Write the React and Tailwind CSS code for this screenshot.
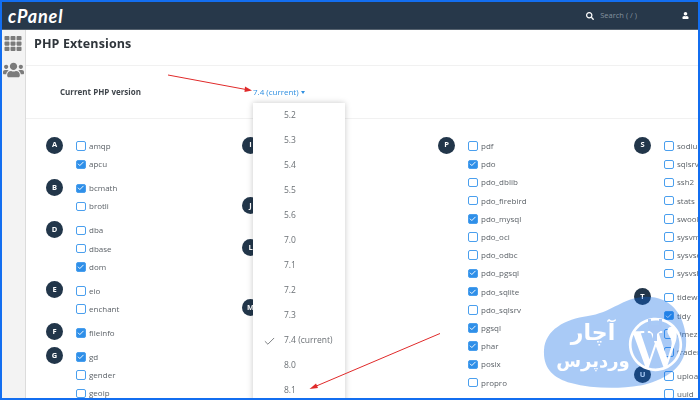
import React from "react";
import { Check } from "lucide-react";
import { FaTh, FaUsers, FaSearch, FaUser, FaWordpressSimple } from "react-icons/fa";

const columns = [
  [
    { letter: "A", rows: [["amqp"], ["apcu", true]] },
    { letter: "B", rows: [["bcmath", true], ["brotli"]] },
    { letter: "D", rows: [["dba"], ["dbase"], ["dom", true]] },
    { letter: "E", rows: [["eio"], ["enchant"]] },
    { letter: "F", rows: [["fileinfo", true]] },
    { letter: "G", rows: [["gd", true], ["gender"], ["geoip"]] },
  ],
  // these rows sit behind the open version menu
  [
    { letter: "I", blank: 3 },
    { letter: "J", blank: 2 },
    { letter: "L", blank: 3 },
    { letter: "M", blank: 3 },
  ],
  [
    {
      letter: "P",
      rows: [
        ["pdf"],
        ["pdo", true],
        ["pdo_dblib"],
        ["pdo_firebird"],
        ["pdo_mysql", true],
        ["pdo_oci"],
        ["pdo_odbc"],
        ["pdo_pgsql", true],
        ["pdo_sqlite", true],
        ["pdo_sqlsrv"],
        ["pgsql", true],
        ["phar", true],
        ["posix", true],
        ["propro"],
      ],
    },
  ],
  [
    {
      letter: "S",
      rows: [["sodium"], ["sqlsrv"], ["ssh2"], ["stats"], ["swoole"], ["sysvmsg"], ["sysvsem"], ["sysvshm"]],
    },
    { letter: "T", rows: [["tideways"], ["tidy", true], ["timezonedb"], ["trader"]] },
    { letter: "U", rows: [["uploadprogress"], ["uuid"]] },
  ],
];

const versions = ["5.2", "5.3", "5.4", "5.5", "5.6", "7.0", "7.1", "7.2", "7.3", "7.4 (current)", "8.0", "8.1"];

function Group({ letter, rows = [], blank = 0 }) {
  return (
    <div className="flex mb-[5.8px]">
      <div className="w-[17px] h-[17px] mt-[-0.5px] rounded-full bg-[#22364a] text-white text-[7.5px] font-bold flex items-center justify-center shrink-0">
        {letter}
      </div>
      <div className="ml-[13px]">
        {rows.map(([name, checked]) => (
          <div key={name} className="h-[18.2px] flex items-center whitespace-nowrap">
            <span
              className={`w-[9.5px] h-[9.5px] rounded-[2px] border border-[#4a9fee] flex items-center justify-center shrink-0 ${
                checked ? "bg-[#2f8fe8]" : "bg-white"
              }`}
            >
              {checked && <Check className="w-[8px] h-[8px] text-white" strokeWidth={3} />}
            </span>
            <span className="ml-[3.5px] text-[8px] text-[#5c6268]">{name}</span>
          </div>
        ))}
        {Array.from({ length: blank }).map((_, i) => (
          <div key={i} className="h-[18.2px]" />
        ))}
      </div>
    </div>
  );
}

export default function App() {
  return (
    <div className="relative w-[700px] h-[400px] overflow-hidden bg-white border-2 border-[#136ef0] font-['Open_Sans',sans-serif]">
      <div className="flex flex-col h-full blur-[0.3px]">
        {/* Top bar */}
        <header className="h-[28px] shrink-0 bg-[#27384a] border-b border-[#56626e] flex items-center">
          <span className="ml-[6px] text-[18px] leading-none font-bold italic text-white font-['Lato',sans-serif] tracking-[0.9px]">
            cPanel
          </span>
          <FaSearch className="ml-auto w-[8px] h-[8px] text-white" />
          <span className="ml-[6px] text-[7.5px] text-[#84929f]">Search ( / )</span>
          <FaUser className="ml-[45px] mr-[9px] w-[7px] h-[7px] text-white" />
        </header>

        <div className="flex flex-1 min-h-0">
          {/* Sidebar */}
          <aside className="w-[24px] shrink-0 bg-[#f3f3f3] border-r border-[#dcdcdc] flex flex-col items-center pt-[5px] pr-[1px]">
            <FaTh className="w-[18px] h-[17px] text-[#7b7b7b]" />
            <FaUsers className="w-[21px] h-[18px] mt-[9px] text-[#7b7b7b]" />
          </aside>

          <main className="flex-1 min-w-0">
            <div className="h-[36px] pl-[8px] border-b border-[#f1f1f1] flex items-center">
              <h1 className="text-[12.5px] font-bold text-[#2f353b] tracking-[0.1px] pb-[10px] mt-[3px]">PHP Extensions</h1>
            </div>

            {/* Version row */}
            <div className="relative h-[53px] pl-[34px] border-b border-[#f1f1f1] flex items-center">
              <span className="w-[193px] text-[8px] font-bold text-[#40464c]">Current PHP version</span>
              <span className="text-[8px] text-[#2f8fe0] flex items-center">
                7.4 (current)
                <span className="ml-[2px] mt-[1px] border-x-[2.5px] border-x-transparent border-t-[3px] border-t-[#2f8fe0]" />
              </span>
              <div className="absolute z-10 left-[227px] top-[37px] w-[92px] h-[320px] bg-white shadow-[0_0_6px_rgba(0,0,0,0.22)]">
                {versions.map((v) => (
                  <div key={v} className="relative h-[25px] pl-[31px] flex items-center text-[8.5px] text-[#6b7075]">
                    {v.includes("current") && (
                      <Check className="absolute left-[10px] top-[7px] w-[13px] h-[13px] text-[#55595d]" strokeWidth={1.4} />
                    )}
                    {v}
                  </div>
                ))}
              </div>
            </div>

            {/* Extension columns */}
            <div className="grid grid-cols-[196px_196px_196px_196px] pl-[20px] pt-[18px]">
              {columns.map((col) => (
                <div key={col[0].letter}>
                  {col.map((g) => (
                    <Group key={g.letter} letter={g.letter} rows={g.rows} blank={g.blank} />
                  ))}
                </div>
              ))}
            </div>
          </main>
        </div>
      </div>

      {/* Annotation arrows */}
      <svg className="absolute z-20 left-[-2px] top-[-2px] pointer-events-none" width="700" height="400" viewBox="0 0 700 400">
        <path d="M168 75 L246 89.5" stroke="#e02a2a" strokeWidth="1" fill="none" />
        <path d="M252 90.5 L245 86.5 L244.5 92 Z" fill="#e02a2a" />
        <path d="M440 333.5 L314 387" stroke="#e02a2a" strokeWidth="1" fill="none" />
        <path d="M309.5 389 L316 383.5 L318 388 Z" fill="#e02a2a" />
      </svg>

      {/* Watermark */}
      <div className="absolute z-30 left-[541px] top-[288px] w-[150px] h-[100px] pointer-events-none">
        <svg className="absolute inset-0" width="150" height="100" viewBox="0 0 150 100">
          <path
            d="M1 60 C2 40 22 29 45 26 C68 23 78 9 100 7 C125 5 141 22 143 48 C145 74 128 88 100 95 C78 99 50 99 28 93 C10 88 0 78 1 60 Z"
            fill="#0a66e6"
            fillOpacity="0.35"
          />
        </svg>
        <FaWordpressSimple className="absolute left-[85px] top-[27px] w-[55px] h-[55px] text-white" />
        {/* wrench notch on the logo */}
        <svg className="absolute left-[85px] top-[27px]" width="55" height="55" viewBox="0 0 55 55">
          <path d="M20 2 L20 9 C20 14 24 15 25 17 L25 24 L29 24 L29 17 C31 15 34 14 34 9 L34 2 L31 2 L31 8 L23 8 L23 2 Z" fill="#a9c8f5" />
        </svg>
        <div
          dir="rtl"
          className="absolute left-[8px] top-[29px] w-[84px] flex flex-col items-center text-white font-bold font-['DejaVu_Sans',sans-serif]"
        >
          <span className="text-[22px] leading-[28px] pl-[-2px]">آچار</span>
          <span className="text-[18px] leading-[27px]">وردپرس</span>
        </div>
      </div>
    </div>
  );
}
